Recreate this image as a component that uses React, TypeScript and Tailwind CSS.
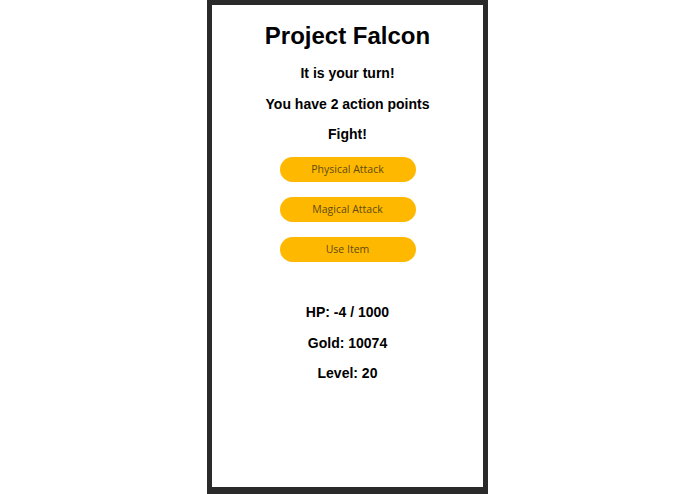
const actions = ['Physical Attack', 'Magical Attack', 'Use Item'];

const stats = ['HP: -4 / 1000', 'Gold: 10074', 'Level: 20'];

export default function App() {
  return (
    <div className="flex h-[494px] w-[695px] justify-center bg-white font-['Liberation_Sans',Arial,sans-serif]">
      <div className="flex h-[494px] w-[281px] flex-col items-center border-[5px] border-b-[7px] border-[#2a2a2a] bg-white text-black">
        <h1 className="mt-[17px] text-[24px] leading-[28px] font-bold">Project Falcon</h1>

        <h4 className="mt-[15px] text-[14px] leading-[16px] font-bold">It is your turn!</h4>
        <h4 className="mt-[15px] text-[14px] leading-[16px] font-bold">You have 2 action points</h4>
        <h4 className="mt-[14px] text-[14px] leading-[16px] font-bold">Fight!</h4>

        <div className="mt-[15px] flex flex-col gap-[15px]">
          {actions.map((label) => (
            <button
              key={label}
              className="h-[25px] w-[136px] rounded-full bg-[#ffb800] font-['Open_Sans',sans-serif] text-[10.5px] text-[#5e4b12]"
            >
              {label}
            </button>
          ))}
        </div>

        <div className="mt-[42px] flex flex-col items-center gap-[14.5px]">
          {stats.map((s) => (
            <h4 key={s} className="text-[14px] leading-[16px] font-bold">
              {s}
            </h4>
          ))}
        </div>
      </div>
    </div>
  );
}
